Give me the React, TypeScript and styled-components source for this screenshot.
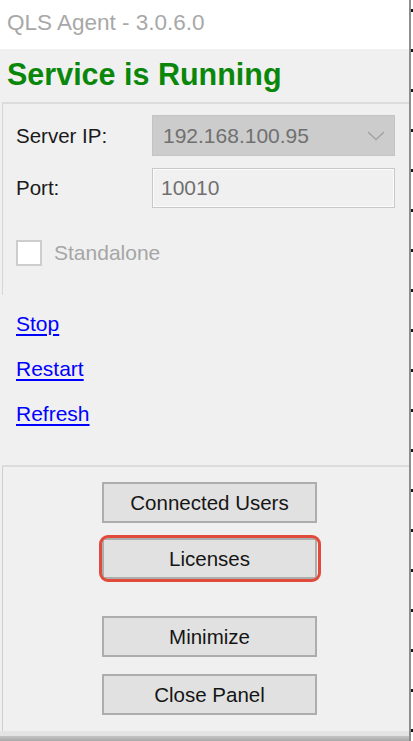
import React from "react";
import styled, { createGlobalStyle } from "styled-components";

const GlobalStyle = createGlobalStyle`
  html, body {
    margin: 0;
    padding: 0;
    background: #ffffff;
  }
  body {
    font-family: "Liberation Sans", Arial, sans-serif;
  }
`;

const Screen = styled.div`
  display: flex;
  flex-direction: row;
  width: 413px;
  height: 741px;
  overflow: hidden;
`;

const Window = styled.div`
  display: flex;
  flex-direction: column;
  width: 409px;
  background: #f0f0f0;
`;

const EdgeStrip = styled.div`
  width: 4px;
  border-left: 2px solid #8e8e8e;
  box-sizing: border-box;
  background: repeating-linear-gradient(
    to bottom,
    #ffffff 0px,
    #ffffff 9px,
    #111111 9px,
    #111111 12px,
    #ffffff 12px,
    #ffffff 40px
  );
`;

const TitleBar = styled.div`
  height: 49px;
  background: #ffffff;
  display: flex;
  align-items: center;
  padding: 0 0 4px 7px;
  box-sizing: border-box;
  font-size: 22.5px;
  color: #a8a8a8;
`;

const Status = styled.div`
  height: 53px;
  display: flex;
  align-items: center;
  padding: 0 0 2px 7px;
  box-sizing: border-box;
  font-size: 30.5px;
  font-weight: 700;
  color: #0a870a;
`;

const Group = styled.div`
  height: 193px;
  margin-left: 2px;
  border-top: 2px solid #dcdcdc;
  border-left: 1px solid #d6d6d6;
  box-sizing: border-box;
  padding: 11px 14px 0 13px;
  display: flex;
  flex-direction: column;
`;

const FieldRow = styled.div<{ $height: number; $gap: number }>`
  display: grid;
  grid-template-columns: 136px 243px;
  align-items: center;
  height: ${(p) => p.$height}px;
  margin-bottom: ${(p) => p.$gap}px;
`;

const Label = styled.span`
  font-size: 20.5px;
  color: #1a1a1a;
`;

const Combo = styled.div`
  height: 41px;
  box-sizing: border-box;
  background: #cccccc;
  border: 1px solid #c4c4c4;
  display: flex;
  align-items: center;
  justify-content: space-between;
  padding: 0 9px 0 10px;
  font-size: 21px;
  color: #707070;
`;

const TextBox = styled.div`
  height: 40px;
  box-sizing: border-box;
  background: #f0f0f0;
  border: 1px solid #c8c8c8;
  box-shadow: inset 0 0 0 1px #fbfbfb;
  display: flex;
  align-items: center;
  padding: 0 8px;
  font-size: 21px;
  color: #707070;
`;

const CheckRow = styled.label`
  display: flex;
  align-items: center;
  gap: 12px;
  font-size: 21px;
  color: #a6a6a6;
`;

const CheckBox = styled.span`
  width: 26px;
  height: 26px;
  box-sizing: border-box;
  background: #ffffff;
  border: 2px solid #cdcdcd;
`;

const Links = styled.div`
  height: 170px;
  padding: 16px 0 0 16px;
  box-sizing: border-box;
  display: flex;
  flex-direction: column;
  align-items: flex-start;
  gap: 19px;
`;

const LinkText = styled.a`
  font-size: 21px;
  line-height: 26px;
  color: #0000ff;
  text-decoration: underline;
  text-underline-offset: 3px;
  cursor: pointer;
`;

const ButtonPanel = styled.div`
  flex: 1;
  margin-left: 2px;
  border-top: 2px solid #dcdcdc;
  border-left: 1px solid #cfcfcf;
  box-sizing: border-box;
  padding: 15px 0 0 99px;
  display: flex;
  flex-direction: column;
  align-items: flex-start;
`;

const PanelButton = styled.button<{ $gapAfter: number }>`
  width: 215px;
  height: 41px;
  margin-bottom: ${(p) => p.$gapAfter}px;
  box-sizing: border-box;
  background: #e1e1e1;
  border: 2px solid #adadad;
  border-radius: 0;
  font-family: "Liberation Sans", Arial, sans-serif;
  font-size: 20.5px;
  color: #151515;
  padding: 0;
`;

const Highlight = styled.div<{ $gapAfter: number }>`
  position: relative;
  margin-bottom: ${(p) => p.$gapAfter}px;
  &::after {
    content: "";
    position: absolute;
    left: -3px;
    right: -4px;
    top: -3px;
    bottom: -3px;
    border: 3px solid #e04b3c;
    border-radius: 9px;
    pointer-events: none;
  }
`;

const Footer = styled.div`
  height: 10px;
  background: linear-gradient(
    to bottom,
    #e3e3e3 0px,
    #e3e3e3 5px,
    #c4c4c4 5px,
    #a9a9a9 10px
  );
`;

const Chevron: React.FC = () => (
  <svg width="18" height="10" viewBox="0 0 18 10">
    <path d="M1 1 L9 8.5 L17 1" fill="none" stroke="#a3a3a3" strokeWidth="1.5" />
  </svg>
);

export default function App() {
  return (
    <Screen>
      <GlobalStyle />
      <Window>
        <TitleBar>QLS Agent - 3.0.6.0</TitleBar>
        <Status>Service is Running</Status>
        <Group>
          <FieldRow $height={41} $gap={12}>
            <Label>Server IP:</Label>
            <Combo>
              192.168.100.95
              <Chevron />
            </Combo>
          </FieldRow>
          <FieldRow $height={40} $gap={32}>
            <Label>Port:</Label>
            <TextBox>10010</TextBox>
          </FieldRow>
          <CheckRow>
            <CheckBox />
            Standalone
          </CheckRow>
        </Group>
        <Links>
          <LinkText>Stop</LinkText>
          <LinkText>Restart</LinkText>
          <LinkText>Refresh</LinkText>
        </Links>
        <ButtonPanel>
          <PanelButton $gapAfter={15}>Connected Users</PanelButton>
          <Highlight $gapAfter={37}>
            <PanelButton $gapAfter={0}>Licenses</PanelButton>
          </Highlight>
          <PanelButton $gapAfter={17}>Minimize</PanelButton>
          <PanelButton $gapAfter={0}>Close Panel</PanelButton>
        </ButtonPanel>
        <Footer />
      </Window>
      <EdgeStrip />
    </Screen>
  );
}
